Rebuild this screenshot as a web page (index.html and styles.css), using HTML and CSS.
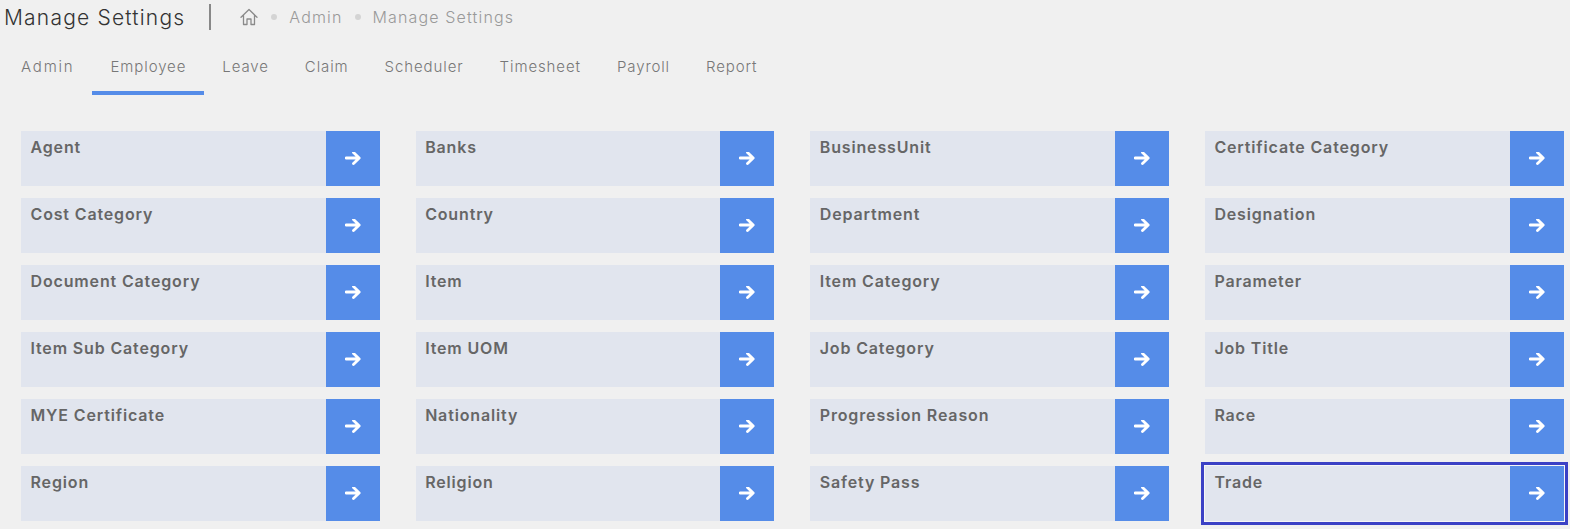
FILE: index.html
```html
<!DOCTYPE html>
<html lang="en">
<head>
<meta charset="utf-8"/>
<meta content="width=device-width, initial-scale=1.0" name="viewport"/>
<title>Manage Settings</title>
<link rel="stylesheet" href="styles.css">
</head>
<body>
<svg class="sprite" width="0" height="0">
  <symbol id="arrow" viewBox="0 0 16 14">
    <path d="M1 6H14M8.5 0.5L14.2 6L8.5 11.5" fill="none" stroke="#fff" stroke-width="2.8" stroke-linecap="round" stroke-linejoin="round"/>
  </symbol>
</svg>
<div class="page-head">
  <h1 class="page-title">Manage Settings</h1>
  <nav class="crumbs">
    <svg class="home-icon" viewBox="0 0 18 18"><path d="M1 9.2L9 1.5L17 9.2M3.5 7.5V16.5H7V11H11V16.5H14.5V7.5" fill="none" stroke="#8a8a8a" stroke-width="1.3" stroke-linejoin="round" stroke-linecap="round"/></svg>
    <span class="dot"></span>
    <span>Admin</span>
    <span class="dot"></span>
    <span>Manage Settings</span>
  </nav>
</div>
<div class="tabs">
  <a class="tab">Admin</a>
  <a class="tab active">Employee</a>
  <a class="tab">Leave</a>
  <a class="tab">Claim</a>
  <a class="tab">Scheduler</a>
  <a class="tab">Timesheet</a>
  <a class="tab">Payroll</a>
  <a class="tab">Report</a>
</div>
<div class="cards">
  <div class="card"><span class="card-name">Agent</span><a class="go"><svg><use href="#arrow"/></svg></a></div>
  <div class="card"><span class="card-name">Banks</span><a class="go"><svg><use href="#arrow"/></svg></a></div>
  <div class="card"><span class="card-name">BusinessUnit</span><a class="go"><svg><use href="#arrow"/></svg></a></div>
  <div class="card"><span class="card-name">Certificate Category</span><a class="go"><svg><use href="#arrow"/></svg></a></div>
  <div class="card"><span class="card-name">Cost Category</span><a class="go"><svg><use href="#arrow"/></svg></a></div>
  <div class="card"><span class="card-name">Country</span><a class="go"><svg><use href="#arrow"/></svg></a></div>
  <div class="card"><span class="card-name">Department</span><a class="go"><svg><use href="#arrow"/></svg></a></div>
  <div class="card"><span class="card-name">Designation</span><a class="go"><svg><use href="#arrow"/></svg></a></div>
  <div class="card"><span class="card-name">Document Category</span><a class="go"><svg><use href="#arrow"/></svg></a></div>
  <div class="card"><span class="card-name">Item</span><a class="go"><svg><use href="#arrow"/></svg></a></div>
  <div class="card"><span class="card-name">Item Category</span><a class="go"><svg><use href="#arrow"/></svg></a></div>
  <div class="card"><span class="card-name">Parameter</span><a class="go"><svg><use href="#arrow"/></svg></a></div>
  <div class="card"><span class="card-name">Item Sub Category</span><a class="go"><svg><use href="#arrow"/></svg></a></div>
  <div class="card"><span class="card-name">Item UOM</span><a class="go"><svg><use href="#arrow"/></svg></a></div>
  <div class="card"><span class="card-name">Job Category</span><a class="go"><svg><use href="#arrow"/></svg></a></div>
  <div class="card"><span class="card-name">Job Title</span><a class="go"><svg><use href="#arrow"/></svg></a></div>
  <div class="card"><span class="card-name">MYE Certificate</span><a class="go"><svg><use href="#arrow"/></svg></a></div>
  <div class="card"><span class="card-name">Nationality</span><a class="go"><svg><use href="#arrow"/></svg></a></div>
  <div class="card"><span class="card-name">Progression Reason</span><a class="go"><svg><use href="#arrow"/></svg></a></div>
  <div class="card"><span class="card-name">Race</span><a class="go"><svg><use href="#arrow"/></svg></a></div>
  <div class="card"><span class="card-name">Region</span><a class="go"><svg><use href="#arrow"/></svg></a></div>
  <div class="card"><span class="card-name">Religion</span><a class="go"><svg><use href="#arrow"/></svg></a></div>
  <div class="card"><span class="card-name">Safety Pass</span><a class="go"><svg><use href="#arrow"/></svg></a></div>
  <div class="card focused"><span class="card-name">Trade</span><a class="go"><svg><use href="#arrow"/></svg></a></div>
</div>
</body>
</html>
```
FILE: styles.css
```css
body {
  font-family: Inter, "Liberation Sans", sans-serif;
  background: #f0f0f0;
  margin: 0;
  min-height: 100vh;
  overflow: hidden;
}
.sprite { position: absolute; }
.page-head {
  display: flex;
  align-items: center;
  height: 34px;
  padding-left: 4px;
}
.page-title {
  margin: 0;
  padding-right: 24px;
  font-size: 21px;
  font-weight: 300;
  letter-spacing: 1.2px;
  color: #333;
}
.crumbs {
  display: flex;
  align-items: center;
  gap: 12px;
  height: 26px;
  padding-left: 29px;
  border-left: 2px solid #888;
  font-size: 16px;
  font-weight: 300;
  letter-spacing: 1.15px;
  color: #999;
}
.home-icon { width: 18px; height: 18px; margin-right: 1px; }
.dot {
  width: 6px;
  height: 6px;
  border-radius: 50%;
  background: #d4d4d4;
}
.tabs {
  display: flex;
  margin: 13px 0 0 3px;
}
.tab {
  padding: 10px 18px 15px;
  border-bottom: 4px solid transparent;
  font-size: 15px;
  line-height: 19px;
  font-weight: 300;
  letter-spacing: 0.9px;
  color: #777;
}
.tab:first-child { letter-spacing: 1.8px; }
.tab.active { border-bottom-color: #558ce8; }
.cards {
  display: grid;
  grid-template-columns: repeat(4, 1fr);
  gap: 12px 36px;
  margin-top: 36px;
  padding: 0 6.5px 0 21px;
}
.card {
  display: flex;
  justify-content: space-between;
  height: 55px;
  background: #e1e5ee;
}
.card.focused { box-shadow: 0 0 0 1px #f6f6f6, 0 0 0 4px #3b41c5; }
.card-name {
  padding: 7px 9.5px;
  font-size: 16px;
  line-height: 19px;
  font-weight: 600;
  letter-spacing: 0.85px;
  color: #666;
}
.go {
  display: flex;
  align-items: center;
  justify-content: center;
  width: 54px;
  background: #558ce8;
}
.go svg { width: 16px; height: 14px; }
```
